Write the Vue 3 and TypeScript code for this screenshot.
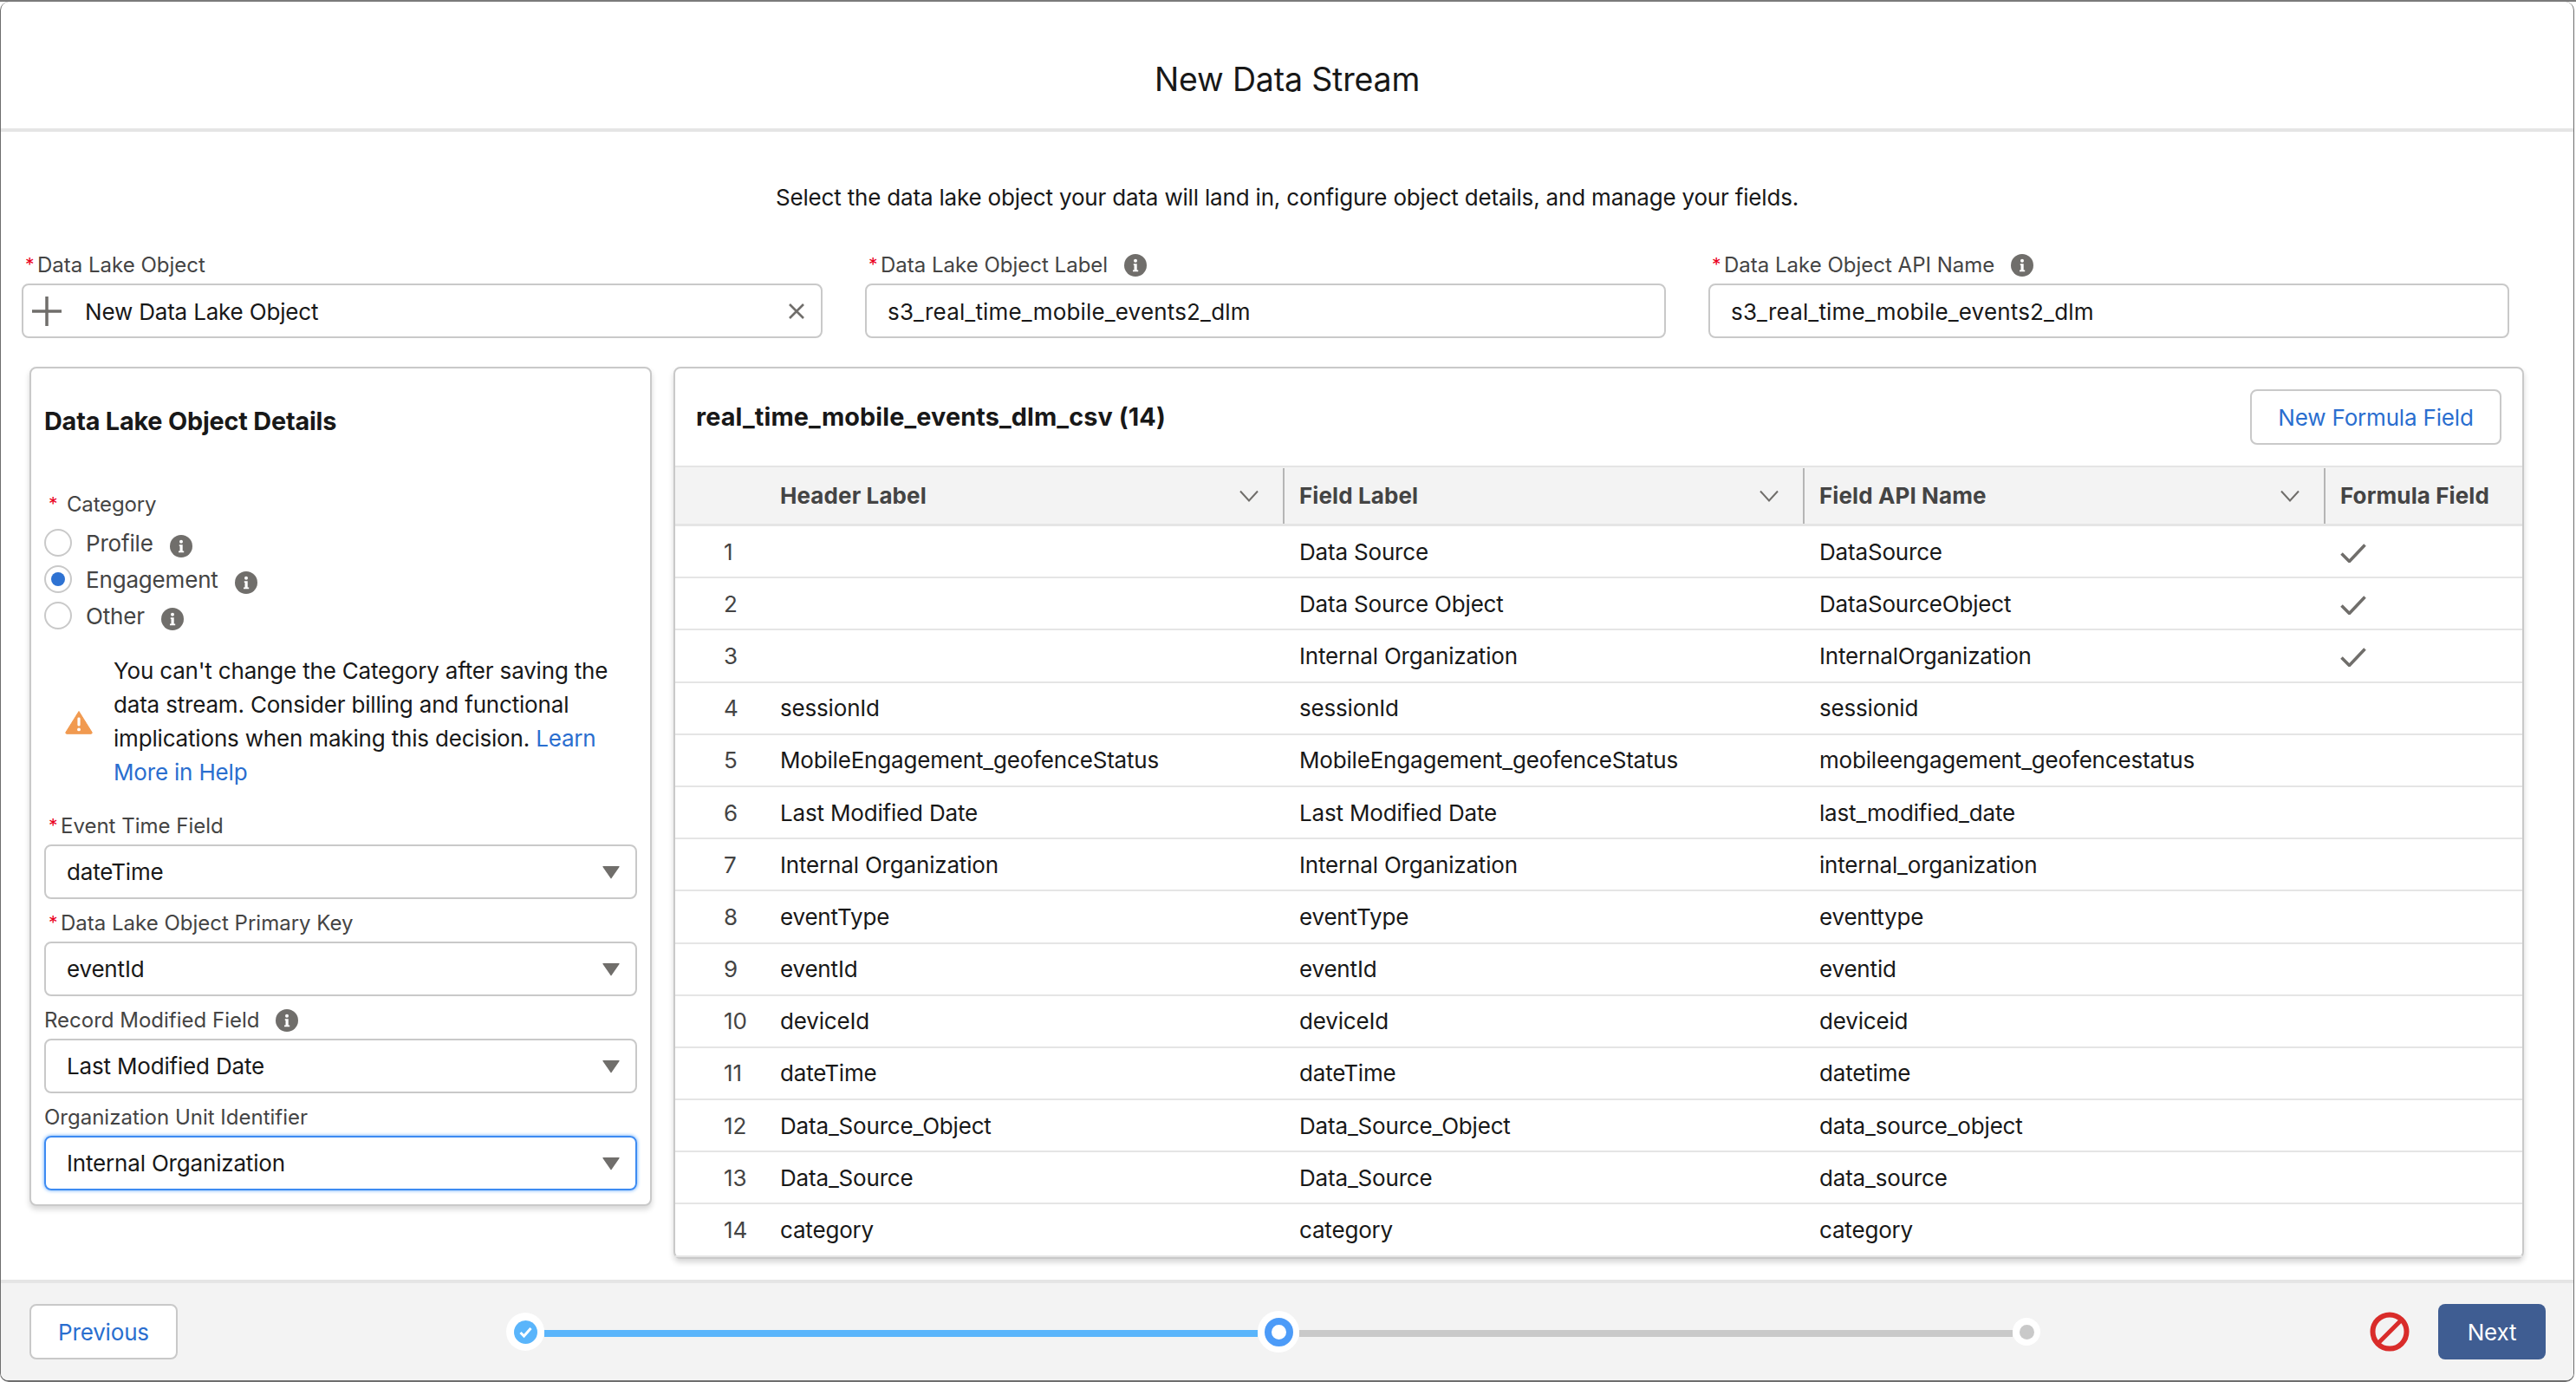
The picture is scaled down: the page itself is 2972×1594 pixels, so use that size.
<template>
  <div class="screen">
    <svg class="defs" width="0" height="0" aria-hidden="true">
      <symbol id="info" viewBox="0 0 26 26">
        <circle cx="13" cy="13" r="13" fill="#706e6b" />
        <circle cx="13" cy="7.8" r="2" fill="#fff" />
        <path d="M10.8 11.2h3.9v7.2h1.5v1.9h-6.2v-1.9h1.5v-5.3h-.7z" fill="#fff" />
      </symbol>
      <symbol id="caret" viewBox="0 0 20 16">
        <path d="M1 1h18a.6.6 0 0 1 .5 1L10.5 15a.6.6 0 0 1-1 0L.5 2A.6.6 0 0 1 1 1z" fill="#706e6b" />
      </symbol>
    </svg>

    <div class="modal">
      <header class="modal-head">New Data Stream</header>

      <main class="modal-body">
        <p class="intro">Select the data lake object your data will land in, configure object details, and manage your fields.</p>

        <div class="top-fields">
          <div>
            <div class="label"><span class="star">*</span>Data Lake Object</div>
            <div class="input">
              <svg class="plus" width="34" height="34" viewBox="0 0 34 34">
                <path d="M17 0v34M0 17h34" stroke="#706e6b" stroke-width="3.5" fill="none" />
              </svg>
              <span class="input-text">New Data Lake Object</span>
              <svg class="clear" width="20" height="20" viewBox="0 0 20 20">
                <path d="M2 2l16 16M18 2L2 18" stroke="#706e6b" stroke-width="2.6" fill="none" />
              </svg>
            </div>
          </div>
          <div v-for="f in apiFields" :key="f">
            <div class="label">
              <span class="star">*</span>{{ f }}
              <svg class="info lab-info"><use href="#info" /></svg>
            </div>
            <div class="input plain">s3_real_time_mobile_events2_dlm</div>
          </div>
        </div>

        <div class="cards">
          <section class="card details">
            <h2 class="card-title">Data Lake Object Details</h2>

            <div class="cat-label"><span class="star">*</span>Category</div>
            <div v-for="r in radios" :key="r.name" class="radio-row">
              <span class="radio" :class="{ on: r.on }"></span>
              <span>{{ r.name }}</span>
              <svg class="info"><use href="#info" /></svg>
            </div>

            <div class="warn">
              <svg class="warn-icon" width="32" height="28" viewBox="0 0 32 28">
                <path d="M16 1.5 31 25.5a1.2 1.2 0 0 1-1 1.8H2a1.2 1.2 0 0 1-1-1.8z" fill="#f19a50" stroke="#f19a50" stroke-linejoin="round" />
                <rect x="14.4" y="8.5" width="3.2" height="10" rx="1.4" fill="#fff" />
                <circle cx="16" cy="22.4" r="1.9" fill="#fff" />
              </svg>
              <p>You can't change the Category after saving the data stream. Consider billing and functional implications when making this decision. <a>Learn More in Help</a></p>
            </div>

            <div v-for="s in selects" :key="s.label" class="sel-field">
              <div class="label" :class="{ req: s.req }">
                <span v-if="s.req" class="star">*</span>{{ s.label }}
                <svg v-if="s.info" class="info rec-info"><use href="#info" /></svg>
              </div>
              <div class="select" :class="{ focus: s.focus }">
                <span>{{ s.value }}</span>
                <svg class="caret"><use href="#caret" /></svg>
              </div>
            </div>
          </section>

          <section class="card fields">
            <div class="fields-head">
              <h2 class="card-title wide">real_time_mobile_events_dlm_csv (14)</h2>
              <button class="btn">New Formula Field</button>
            </div>
            <div class="grid thead">
              <div></div>
              <div v-for="c in sortCols" :key="c" class="th">
                <span class="th-text">{{ c }}</span>
                <svg class="chev" width="22" height="14" viewBox="0 0 22 14">
                  <path d="M1 1.5l10 11 10-11" stroke="#706e6b" stroke-width="2" fill="none" />
                </svg>
                <i class="resizer"></i>
              </div>
              <div class="th"><span class="th-text">Formula Field</span></div>
            </div>
            <div v-for="(row, i) in rows" :key="i" class="grid trow">
              <div class="num">{{ i + 1 }}</div>
              <div class="td">{{ row[0] }}</div>
              <div class="td">{{ row[1] }}</div>
              <div class="td">{{ row[2] }}</div>
              <div class="td">
                <svg v-if="i < 3" class="check" width="30" height="22" viewBox="0 0 30 22">
                  <path d="M1.5 11.5l9 9L28.5 1.5" stroke="#706e6b" stroke-width="3.6" fill="none" />
                </svg>
              </div>
            </div>
          </section>
        </div>
      </main>

      <footer class="modal-foot">
        <button class="btn prev">Previous</button>
        <div class="progress">
          <span class="halo first">
            <svg width="27" height="27" viewBox="0 0 27 27">
              <circle cx="13.5" cy="13.5" r="13.5" fill="#5ab5fb" />
              <path d="M7.5 14l4 4 8-9" stroke="#fff" stroke-width="3" fill="none" />
            </svg>
          </span>
          <span class="bar done"></span>
          <span class="halo current"><i></i></span>
          <span class="bar"></span>
          <span class="halo last"><i></i></span>
        </div>
        <svg class="blocked" width="46" height="46" viewBox="0 0 46 46">
          <circle cx="23" cy="23" r="19.5" stroke="#d92c2a" stroke-width="6" fill="none" />
          <path d="M9.5 36.5l27-27" stroke="#d92c2a" stroke-width="5" />
        </svg>
        <button class="next">Next</button>
      </footer>
    </div>
  </div>
</template>

<script setup lang="ts">
const apiFields = ['Data Lake Object Label', 'Data Lake Object API Name']

const radios = [
  { name: 'Profile', on: false },
  { name: 'Engagement', on: true },
  { name: 'Other', on: false },
]

const selects = [
  { label: 'Event Time Field', value: 'dateTime', req: true, info: false, focus: false },
  { label: 'Data Lake Object Primary Key', value: 'eventId', req: true, info: false, focus: false },
  { label: 'Record Modified Field', value: 'Last Modified Date', req: false, info: true, focus: false },
  { label: 'Organization Unit Identifier', value: 'Internal Organization', req: false, info: false, focus: true },
]

const sortCols = ['Header Label', 'Field Label', 'Field API Name']

const rows: string[][] = [
  ['', 'Data Source', 'DataSource'],
  ['', 'Data Source Object', 'DataSourceObject'],
  ['', 'Internal Organization', 'InternalOrganization'],
  ['sessionId', 'sessionId', 'sessionid'],
  ['MobileEngagement_geofenceStatus', 'MobileEngagement_geofenceStatus', 'mobileengagement_geofencestatus'],
  ['Last Modified Date', 'Last Modified Date', 'last_modified_date'],
  ['Internal Organization', 'Internal Organization', 'internal_organization'],
  ['eventType', 'eventType', 'eventtype'],
  ['eventId', 'eventId', 'eventid'],
  ['deviceId', 'deviceId', 'deviceid'],
  ['dateTime', 'dateTime', 'datetime'],
  ['Data_Source_Object', 'Data_Source_Object', 'data_source_object'],
  ['Data_Source', 'Data_Source', 'data_source'],
  ['category', 'category', 'category'],
]
</script>

<style>
html,
body {
  margin: 0;
  background: #fff;
}
</style>

<style scoped>
.screen {
  width: 2972px;
  height: 1594px;
  padding-top: 2px;
  box-sizing: border-box;
  background: linear-gradient(#7a7a7a 0 2px, #fff 2px);
  font-family: Inter, 'Liberation Sans', sans-serif;
  font-size: 26px;
  letter-spacing: -0.18px;
  color: #181818;
  overflow: hidden;
}
.defs {
  position: absolute;
}
.modal {
  width: 2970px;
  height: 1592px;
  box-sizing: border-box;
  display: flex;
  flex-direction: column;
  background: #fff;
  border: solid #6e6e6e;
  border-width: 0 1px 2px 1px;
  border-radius: 10px;
  overflow: hidden;
}
.modal-head {
  height: 150px;
  flex: none;
  box-sizing: border-box;
  border-bottom: 4px solid #e5e5e5;
  display: flex;
  align-items: center;
  justify-content: center;
  font-size: 37.5px;
  padding-top: 32px;
  padding-bottom: 0;
  color: #181818;
}
.modal-body {
  flex: 1;
  padding: 56px 0 0 24px;
}
.intro {
  margin: 0;
  line-height: 40px;
  text-align: center;
  padding-right: 24px;
}
.top-fields {
  display: grid;
  grid-template-columns: repeat(3, 924px);
  gap: 49px;
  margin-top: 43px;
}
.label {
  height: 30px;
  line-height: 30px;
  font-size: 24px;
  letter-spacing: 0;
  color: #444;
  margin-bottom: 6px;
  display: flex;
  align-items: center;
  white-space: pre;
}
.star {
  color: #ea001e;
  font-size: 21px;
  width: 18px;
  padding-left: 4px;
  box-sizing: border-box;
  flex: none;
}
.info {
  width: 26px;
  height: 26px;
  flex: none;
}
.lab-info {
  margin-left: 12px;
}
.input {
  height: 63px;
  box-sizing: border-box;
  border: 2px solid #c9c9c9;
  border-radius: 8px;
  display: flex;
  align-items: center;
  padding-top: 1px;
}
.input.plain {
  padding-left: 24px;
  letter-spacing: 0.17px;
}
.plus {
  margin-left: 10px;
}
.input-text {
  margin-left: 27px;
  flex: 1;
}
.clear {
  margin-right: 18px;
}
.cards {
  display: flex;
  align-items: flex-start;
  gap: 25px;
  margin: 33px 0 0 9px;
}
.card {
  box-sizing: border-box;
  border: 2px solid #c9c9c9;
  border-radius: 8px;
  background: #fff;
  box-shadow: 0 4px 6px rgba(0, 0, 0, 0.16);
}
.details {
  width: 718px;
  height: 968px;
  padding: 41px 15px 0;
}
.card-title {
  margin: 0;
  font-size: 28.8px;
  line-height: 40px;
  font-weight: 700;
}
.card-title.wide {
  letter-spacing: 0.12px;
}
.cat-label {
  height: 32px;
  line-height: 32px;
  margin-top: 60px;
  margin-bottom: 7px;
  font-size: 24px;
  color: #444;
  display: flex;
}
.cat-label .star {
  width: 26px;
  padding-left: 5px;
}
.radio-row {
  height: 42px;
  display: flex;
  align-items: center;
  color: #444;
}
.radio-row .info {
  margin-left: 19px;
  margin-top: 8px;
}
.radio {
  width: 32px;
  height: 32px;
  box-sizing: border-box;
  border: 2px solid #c9c9c9;
  border-radius: 50%;
  margin-right: 16px;
  position: relative;
}
.radio.on::after {
  content: '';
  position: absolute;
  inset: 6px;
  border-radius: 50%;
  background: #2e72d2;
}
.warn {
  display: flex;
  align-items: center;
  margin-top: 23px;
  margin-bottom: 28px;
  padding-left: 24px;
}
.warn-icon {
  flex: none;
  margin-right: 24px;
  margin-top: 1px;
}
.warn p {
  margin: 0;
  line-height: 39px;
  width: 590px;
}
.warn a {
  color: #2a6ecf;
}
.sel-field + .sel-field {
  margin-top: 13px;
}
.sel-field .label .star {
  width: 19px;
  padding-left: 5px;
}
.rec-info {
  margin-left: 12px;
}
.select {
  height: 63px;
  box-sizing: border-box;
  border: 2px solid #c9c9c9;
  border-radius: 8px;
  display: flex;
  align-items: center;
  justify-content: space-between;
  padding: 0 18px 0 24px;
}
.select.focus {
  border-color: #3d8bf2;
  box-shadow: 0 0 4px #5aa5fb;
}
.caret {
  width: 20px;
  height: 16px;
}
.fields {
  width: 2135px;
  height: 1029px;
}
.fields-head {
  height: 112px;
  box-sizing: border-box;
  display: flex;
  align-items: center;
  justify-content: space-between;
  padding: 0 24px;
}
.btn {
  font: inherit;
  letter-spacing: inherit;
  color: #2a6ecf;
  background: #fff;
  border: 2px solid #c9c9c9;
  border-radius: 8px;
  width: 290px;
  height: 64px;
  padding: 0;
}
.grid {
  display: grid;
  grid-template-columns: 112px 599px 600px 601px 1fr;
}
.thead {
  height: 70px;
  box-sizing: border-box;
  background: #f3f3f3;
  border-top: 2px solid #e5e5e5;
  border-bottom: 3px solid #e5e5e5;
  font-weight: 700;
  letter-spacing: 0.1px;
  color: #444;
}
.th {
  display: flex;
  align-items: center;
  padding-left: 9px;
}
.th-text {
  flex: 1;
}
.chev {
  margin-right: 28px;
}
.resizer {
  width: 2px;
  height: 64px;
  background: #b5b5b5;
  margin-right: 8px;
}
.trow {
  height: 60.2px;
  box-sizing: border-box;
  border-bottom: 2px solid #e5e5e5;
  align-items: center;
}
.num {
  padding-left: 56px;
  color: #444;
}
.td {
  padding-left: 9px;
  display: flex;
  align-items: center;
}
.check {
  margin-top: 3px;
}
.modal-foot {
  height: 116px;
  flex: none;
  box-sizing: border-box;
  background: #f3f3f3;
  border-top: 4px solid #e5e5e5;
  display: flex;
  align-items: center;
  padding: 0 32px 0 33px;
}
.prev {
  width: 171px;
}
.progress {
  display: flex;
  align-items: center;
  margin-left: 379px;
}
.halo {
  border-radius: 50%;
  background: #fff;
  display: flex;
  align-items: center;
  justify-content: center;
  flex: none;
}
.halo.first {
  width: 44px;
  height: 44px;
}
.halo.current {
  width: 48px;
  height: 48px;
}
.halo.current i {
  width: 17px;
  height: 17px;
  box-sizing: content-box;
  border: 8px solid #4c9bf8;
  border-radius: 50%;
}
.halo.last {
  width: 32px;
  height: 32px;
}
.halo.last i {
  width: 17px;
  height: 17px;
  border-radius: 50%;
  background: #c9c9c9;
}
.bar {
  height: 8px;
  width: 823px;
  background: #c9c9c9;
  margin-top: 4px;
}
.bar.done {
  background: #5ab5fb;
}
.blocked {
  margin-left: auto;
  margin-right: 33px;
}
.next {
  font: inherit;
  letter-spacing: inherit;
  color: #fff;
  background: #3f5d92;
  border: 0;
  border-radius: 8px;
  width: 124px;
  height: 64px;
  padding: 0;
}
</style>
